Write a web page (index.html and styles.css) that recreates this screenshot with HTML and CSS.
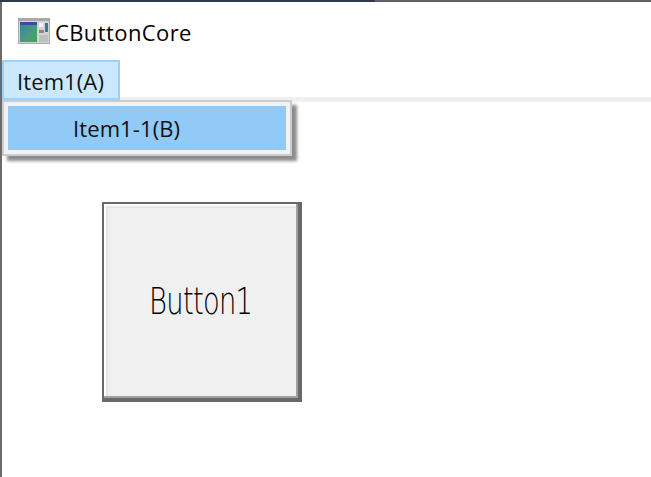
FILE: index.html
```html
<!DOCTYPE html>
<html lang="en">
<head>
    <meta charset="UTF-8">
    <title>CButtonCore</title>
    <link rel="stylesheet" href="styles.css">
</head>
<body>
    <div class="desktop-strip">
        <span class="strip-dark"></span>
        <span class="strip-gray"></span>
    </div>
    <div class="window">
        <div class="titlebar">
            <svg class="app-icon" width="32" height="26" viewBox="0 0 32 26">
                <defs>
                    <linearGradient id="pane" x1="0" y1="0" x2="1" y2="1">
                        <stop offset="0" stop-color="#3f7fa8"/>
                        <stop offset="0.6" stop-color="#4a9a80"/>
                        <stop offset="1" stop-color="#3fa84a"/>
                    </linearGradient>
                </defs>
                <rect width="32" height="26" fill="#a9a9a9"/>
                <rect x="1" y="3" width="30" height="22" fill="#d4d4d4"/>
                <rect x="2" y="4" width="17" height="20" fill="url(#pane)"/>
                <rect x="2" y="4" width="17" height="3" fill="#3a4aa0"/>
                <rect x="21" y="5" width="4" height="4" fill="#f2f2f2"/>
                <rect x="27" y="5" width="3" height="9" fill="#2f7f90"/>
                <rect x="21" y="12" width="5" height="3" fill="#8a8a8a"/>
                <rect x="21" y="17" width="9" height="7" fill="#c0c0c0"/>
            </svg>
            <span class="title">CButtonCore</span>
        </div>
        <div class="menubar">
            <div class="menu-item">Item1(A)</div>
        </div>
        <div class="client">
            <div class="dropdown">
                <div class="dropdown-item">Item1-1(B)</div>
            </div>
            <button class="big-button"><span class="big-label">Button1</span></button>
        </div>
    </div>
</body>
</html>
```

FILE: styles.css
```css
* {
    margin: 0;
    padding: 0;
    box-sizing: border-box;
}

body {
    width: 651px;
    height: 477px;
    overflow: hidden;
    background-color: #fff;
    font-family: "Open Sans", "Liberation Sans", sans-serif;
}

.desktop-strip {
    display: flex;
    height: 2px;
}

.strip-dark {
    width: 375px;
    background-color: #2f3a4e;
}

.strip-gray {
    flex: 1;
    background-color: #5f6068;
}

.window {
    position: relative;
    height: 475px;
    border-left: 2px solid #6b6b6b;
}

.titlebar {
    display: flex;
    align-items: center;
    gap: 5px;
    height: 58px;
    padding: 0 0 0 16px;
}

.title {
    position: relative;
    top: 1px;
    font-size: 22px;
    letter-spacing: 0.4px;
    color: #000;
}

.menubar {
    height: 42px;
    border-bottom: 5px solid #f0f0f0;
}

.menu-item {
    width: 118px;
    height: 40px;
    padding-left: 13px;
    line-height: 38px;
    font-size: 22px;
    letter-spacing: 0.1px;
    color: #111;
    background-color: #cce8ff;
    border: 2px solid #99d1ff;
}

.client {
    position: relative;
}

.dropdown {
    position: absolute;
    top: -2px;
    left: 0;
    width: 290px;
    height: 56px;
    padding: 4px;
    background-color: #f2f2f2;
    border: 2px solid #ccc;
    box-shadow: 5px 5px 3px rgba(0, 0, 0, 0.45);
}

.dropdown-item {
    height: 44px;
    padding-left: 65px;
    line-height: 44px;
    font-size: 22px;
    letter-spacing: 0.1px;
    color: #111;
    background-color: #91c9f7;
}

.big-button {
    position: absolute;
    top: 100px;
    left: 100px;
    width: 200px;
    height: 200px;
    color: #000;
    background-color: #f0f0f0;
    border: 2px solid #696969;
    border-right-width: 4px;
    border-bottom-width: 4px;
    box-shadow: inset -2px -2px 0 #a0a0a0, inset 2px 2px 0 #fff, inset 4px 4px 0 #e6e6e6;
}

.big-label {
    display: inline-block;
    font-family: "DejaVu Sans", sans-serif;
    font-size: 37px;
    font-weight: 200;
    letter-spacing: -1px;
    transform: scaleX(0.74);
}
```
